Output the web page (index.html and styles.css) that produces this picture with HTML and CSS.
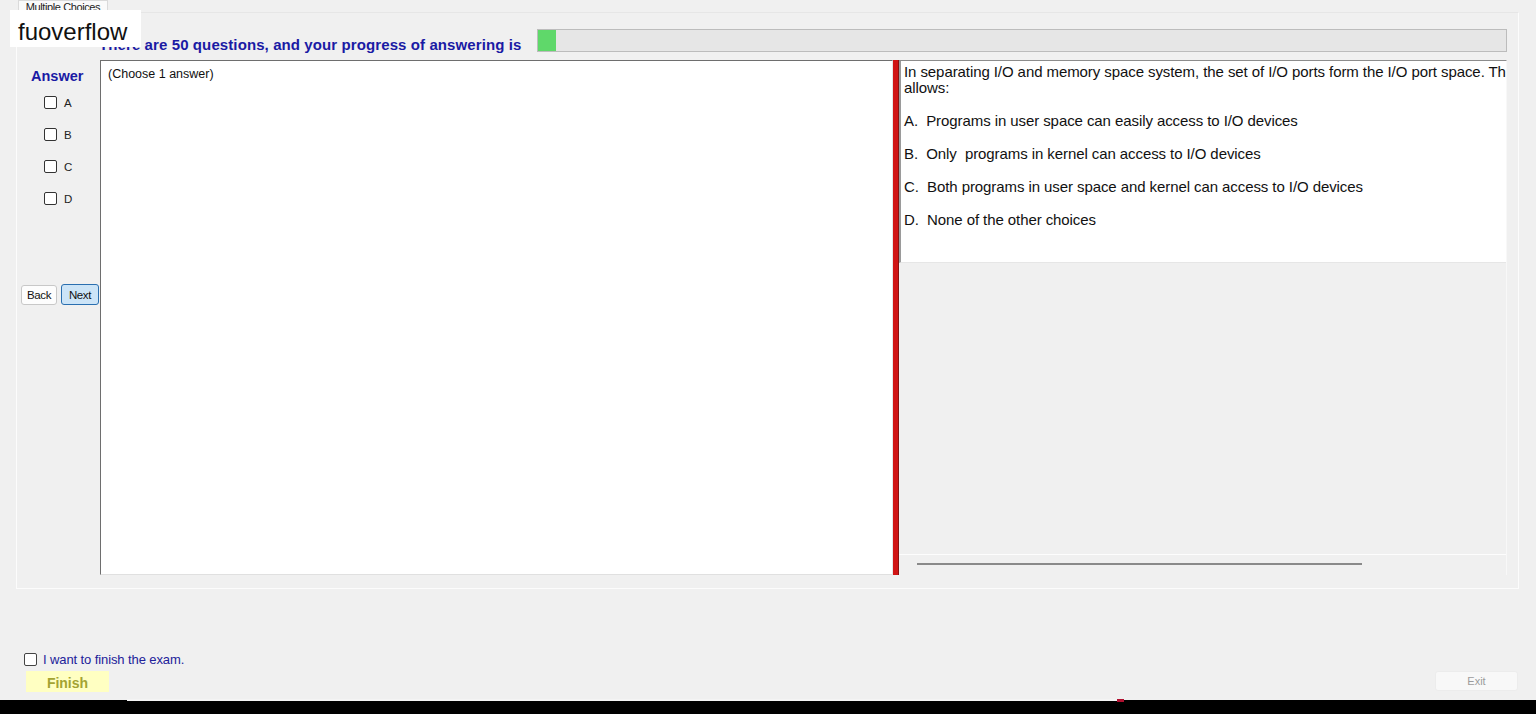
FILE: index.html
```html
<!DOCTYPE html>
<html lang="en">
<head>
  <meta charset="UTF-8">
  <title>Multiple Choices</title>
  <link rel="stylesheet" href="styles.css">
</head>
<body>

  <div class="tab-strip">
    <div class="tab">Multiple Choices</div>
  </div>

  <div class="tab-page">
    <div class="header-row">
      <div class="progress-label">There are 50 questions, and your progress of answering is</div>
      <div class="progress-bar"><div class="progress-fill"></div></div>
    </div>

    <div class="content-row">
      <div class="answer-col">
        <div class="answer-title">Answer</div>
        <label class="answer-option"><span class="box"></span>A</label>
        <label class="answer-option"><span class="box"></span>B</label>
        <label class="answer-option"><span class="box"></span>C</label>
        <label class="answer-option"><span class="box"></span>D</label>
        <div class="nav-buttons">
          <button class="back-button">Back</button>
          <button class="next-button">Next</button>
        </div>
      </div>

      <div class="answer-panel">(Choose 1 answer)</div>

      <div class="splitter"></div>

      <div class="question-panel">
        <div class="question-box">
          <p class="question-first">In separating I/O and memory space system, the set of I/O ports form the I/O port space. Th</p>
          <p class="question-line">allows:</p>
          <p class="choice">A.  Programs in user space can easily access to I/O devices</p>
          <p class="choice">B.  Only  programs in kernel can access to I/O devices</p>
          <p class="choice">C.  Both programs in user space and kernel can access to I/O devices</p>
          <p class="choice">D.  None of the other choices</p>
        </div>
        <div class="question-rest"></div>
        <div class="hscroll"><div class="hscroll-thumb"></div></div>
      </div>
    </div>
  </div>

  <div class="footer">
    <label class="finish-check"><span class="box"></span>I want to finish the exam.</label>
    <div class="footer-buttons">
      <button class="finish-button">Finish</button>
      <button class="exit-button">Exit</button>
    </div>
  </div>

  <div class="taskbar"><div class="taskbar-strip"></div><div class="taskbar-mark"></div></div>

  <div class="watermark">fuoverflow</div>

</body>
</html>
```

FILE: styles.css
```css
/* page */
body {
  margin: 0;
  width: 1536px;
  height: 714px;
  overflow: hidden;
  background-color: #f0f0f0;
  font-family: "Liberation Sans", Arial, sans-serif;
  display: flex;
  flex-direction: column;
  position: relative;
}

/* tab header */
.tab-strip {
  height: 12px;
  padding-left: 18px;
  display: flex;
}

.tab {
  width: 90px;
  height: 12px;
  box-sizing: border-box;
  background-color: #fafafa;
  border: 1px solid #dadada;
  border-bottom: none;
  font-size: 11px;
  line-height: 12px;
  text-align: center;
  color: #222;
  overflow: hidden;
  letter-spacing: -0.4px;
}

/* tab page frame */
.tab-page {
  margin-left: 16px;
  width: 1503px;
  height: 577px;
  box-sizing: border-box;
  border: 1px solid #fcfcfc;
  border-top-color: #e6e6e6;
  padding: 16px 11px 13px 4px;
  display: flex;
  flex-direction: column;
}

.header-row {
  display: flex;
  align-items: center;
  height: 23px;
}

.progress-label {
  margin: 7px 0 0 78px;
  font-size: 15px;
  font-weight: bold;
  color: #1a1aa4;
  white-space: nowrap;
  letter-spacing: 0.1px;
}

.progress-bar {
  flex: 1;
  height: 23px;
  margin-left: 16px;
  box-sizing: border-box;
  background-color: #e6e6e6;
  border: 1px solid #bcbcbc;
}

.progress-fill {
  width: 18px;
  height: 100%;
  background-color: #5fd86a;
}

.content-row {
  margin-top: 8px;
  height: 515px;
  display: flex;
}

/* left answer column */
.answer-col {
  width: 79px;
  display: flex;
  flex-direction: column;
}

.answer-title {
  margin: 9px 0 0 10px;
  font-size: 14.5px;
  font-weight: bold;
  color: #1a1aa4;
  line-height: 15px;
}

.answer-option {
  display: flex;
  align-items: center;
  height: 13px;
  margin: 14px 0 5px 23px;
  font-size: 11.5px;
  color: #222;
}

.answer-option:first-of-type {
  margin-top: 12px;
}

.box {
  display: inline-block;
  width: 11px;
  height: 11px;
  border: 1px solid #333;
  border-radius: 2px;
  background-color: #fff;
  margin-right: 7px;
}

.nav-buttons {
  margin-top: 74px;
  display: flex;
  gap: 4px;
}

.back-button,
.next-button {
  height: 20px;
  padding: 0;
  font-family: "Liberation Sans", Arial, sans-serif;
  font-size: 11.5px;
  color: #111;
  border-radius: 3px;
  letter-spacing: -0.4px;
}

.back-button {
  width: 36px;
  background-color: #fdfdfd;
  border: 1px solid #c8c8c8;
  margin-top: 1px;
}

.next-button {
  width: 38px;
  height: 21px;
  background-color: #cce4f7;
  border: 1px solid #2a6fb0;
}

/* white answer panel */
.answer-panel {
  width: 793px;
  box-sizing: border-box;
  background-color: #fff;
  border-top: 1px solid #6e6e6e;
  border-left: 1px solid #6e6e6e;
  border-right: 1px solid #e6e6e6;
  border-bottom: 1px solid #e0e0e0;
  padding: 6px 7px;
  font-size: 12.5px;
  color: #111;
}

.splitter {
  width: 6px;
  background-color: #d01414;
  border-right: 1px solid #8a1010;
  box-sizing: border-box;
}

/* question panel */
.question-panel {
  flex: 1;
  display: flex;
  flex-direction: column;
  border-top: 1px solid #8c8c8c;
  border-right: 1px solid #f8f8f8;
  background-color: #f0f0f0;
  min-width: 0;
}

.question-box {
  height: 198px;
  background-color: #fff;
  border-left: 2px solid #9a9a9a;
  border-bottom: 1px solid #e6e6e6;
  padding: 3px 0 0 3px;
  overflow: hidden;
  font-size: 15px;
  color: #111;
}

.question-box p {
  margin: 0;
  line-height: 16px;
  white-space: pre;
  letter-spacing: -0.08px;
}

.choice {
  margin-top: 17px !important;
}

.question-rest {
  flex: 1;
  border-bottom: 1px solid #fdfdfd;
}

.hscroll {
  height: 17px;
  display: flex;
  align-items: center;
  padding: 0 0 3px 18px;
}

.hscroll-thumb {
  width: 445px;
  height: 2px;
  background-color: #8a8a8a;
}

/* bottom area */
.footer {
  flex: 1;
  padding: 64px 18px 0 24px;
  display: flex;
  flex-direction: column;
}

.finish-check {
  display: flex;
  align-items: center;
  height: 13px;
  font-size: 13px;
  color: #22229a;
  letter-spacing: -0.1px;
}

.finish-check .box {
  border-color: #444;
  margin-right: 6px;
}

.footer-buttons {
  margin-top: 5px;
  display: flex;
  justify-content: space-between;
}

.finish-button {
  margin-left: 2px;
  width: 83px;
  height: 21px;
  padding: 2px 0 0;
  border: none;
  background-color: #ffffc2;
  color: #a3a332;
  font-family: "Liberation Sans", Arial, sans-serif;
  font-size: 14px;
  font-weight: bold;
}

.exit-button {
  width: 83px;
  height: 20px;
  padding: 0;
  border: 1px solid #ececec;
  border-radius: 3px;
  background-color: #f8f8f8;
  color: #9c9c9c;
  font-family: "Liberation Sans", Arial, sans-serif;
  font-size: 11px;
}

.taskbar {
  height: 14px;
  background-color: #000;
  position: relative;
}

.taskbar-strip {
  position: absolute;
  left: 127px;
  top: -1px;
  width: 990px;
  height: 2px;
  background-color: #f4f4f4;
}

.taskbar-mark {
  position: absolute;
  left: 1117px;
  top: -1px;
  width: 7px;
  height: 3px;
  background-color: #b01030;
}

/* watermark overlay */
.watermark {
  position: absolute;
  left: 10px;
  top: 10px;
  width: 123px;
  height: 37px;
  padding-left: 8px;
  background-color: #fff;
  font-size: 24px;
  line-height: 43px;
  color: #111;
  overflow: hidden;
}
```
